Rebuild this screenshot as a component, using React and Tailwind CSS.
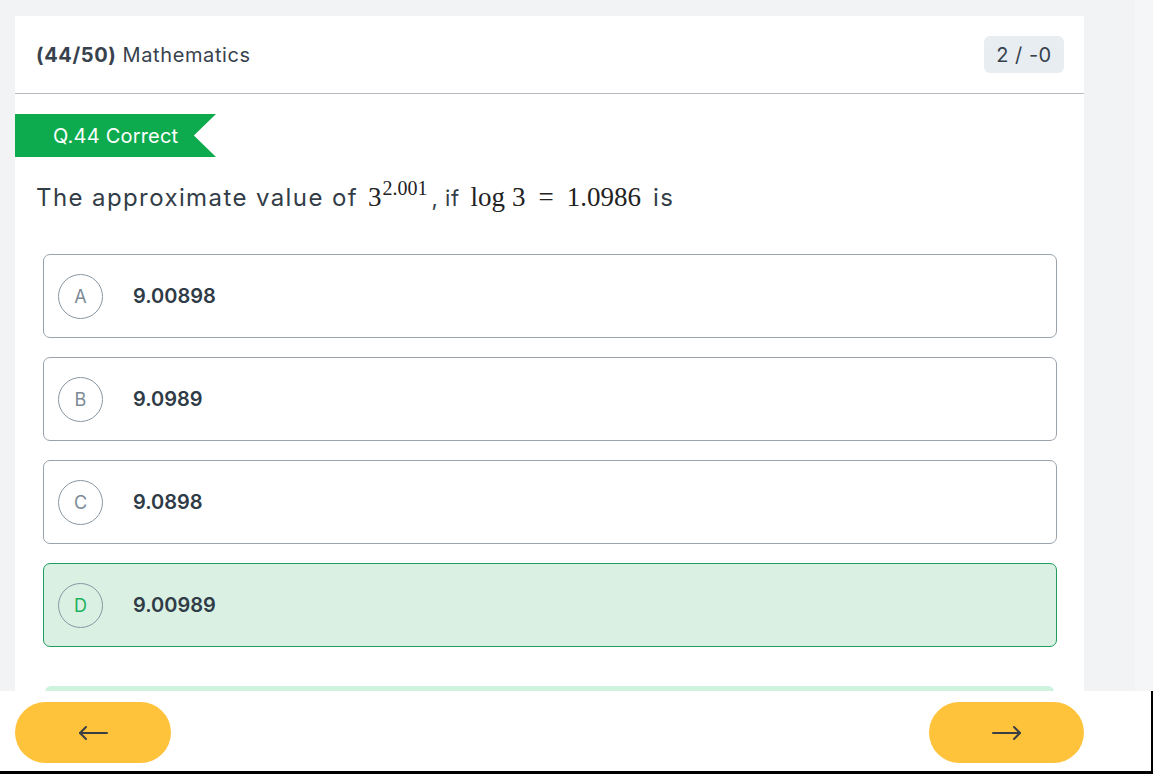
import React from 'react';

const options = [
  { key: 'A', text: '9.00898' },
  { key: 'B', text: '9.0989' },
  { key: 'C', text: '9.0898' },
  { key: 'D', text: '9.00989', correct: true },
];

const sans = { fontFamily: 'Inter, "Open Sans", sans-serif' };
const serif = { fontFamily: '"Liberation Serif", "DejaVu Serif", serif' };

export default function App() {
  return (
    <div className="h-[774px] w-[1153px] flex flex-col bg-[#f2f3f5] overflow-hidden" style={sans}>
      {/* scrolling area */}
      <div className="flex-1 flex overflow-hidden">
        <div className="pl-[15px] pt-4 w-[1135px]">
          <div className="w-[1069px] h-full bg-white">
            {/* header */}
            <div className="flex items-center justify-between pl-[21px] pr-5 h-[78px] border-b border-[#b6bbc1]">
              <div className="text-[20px] text-[#37424d] tracking-[0.6px]">
                <span className="font-bold">(44/50)</span> Mathematics
              </div>
              <div className="bg-[#e8edf2] rounded-md w-[80px] h-[37px] flex items-center justify-center text-[20px] text-[#37424d] tracking-[0.5px]">
                2 / -0
              </div>
            </div>

            {/* ribbon */}
            <div
              className="mt-5 w-[201px] h-[43px] bg-[#0dab4e] text-white text-[20px] flex items-center pl-[38px] tracking-[0.2px]"
              style={{ clipPath: 'polygon(0 0, 100% 0, 89% 50%, 100% 100%, 0 100%)' }}
            >
              Q.44 Correct
            </div>

            {/* question */}
            <div className="mt-[20px] pl-[21px] flex items-baseline text-[24px] text-[#333d47] h-[36px] tracking-[1.4px]">
              <span>The approximate value of</span>
              <span className="ml-[10px] text-[27px] text-[#222] tracking-normal" style={serif}>
                3<sup className="text-[20px] ml-[1px] relative -top-[11px]">2.001</sup>
              </span>
              <span className="ml-[4px] text-[22px] tracking-[0.5px]">, if</span>
              <span className="ml-[11px] text-[27px] text-[#222] tracking-normal" style={serif}>
                log<span className="ml-[7px]">3</span>
                <span className="mx-[13px]">=</span>1.0986
              </span>
              <span className="ml-[12px]">is</span>
            </div>

            {/* options */}
            <div className="mt-[41px] ml-[28px] mr-[27px] flex flex-col gap-[19px]">
              {options.map((o) => (
                <div
                  key={o.key}
                  className={`h-[84px] rounded-[7px] border flex items-center pl-[14px] ${
                    o.correct ? 'bg-[#d9f0e3] border-[#1f9d5c]' : 'bg-white border-[#9aa2ab]'
                  }`}
                >
                  <div
                    className={`w-[45px] h-[45px] rounded-full border border-[#8a97a3] flex items-center justify-center text-[18px] ${
                      o.correct ? 'text-[#20b25c]' : 'text-[#7d8a96]'
                    }`}
                  >
                    {o.key}
                  </div>
                  <div className="ml-[30px] text-[20px] font-semibold text-[#2f3b46]">{o.text}</div>
                </div>
              ))}
            </div>

            {/* explanation box (cut off) */}
            <div className="mt-[39px] mx-[30px] h-[20px] rounded-t-[6px] bg-[#cdf3df]" />
          </div>
        </div>
        <div className="flex-1 bg-[#f5f6f7]" />
      </div>

      {/* bottom nav */}
      <div className="h-[83px] bg-white border-r-2 border-b-[3px] border-black flex items-start justify-between pl-[15px] pr-[67px] pt-[11px]">
        <button className="w-[156px] h-[61px] rounded-full bg-[#ffc23b] flex items-center justify-center text-[#3a3f44]">
          <svg width="30" height="16" viewBox="0 0 30 16" fill="none" stroke="currentColor" strokeWidth="2" strokeLinecap="round" strokeLinejoin="round">
            <path d="M29 8H2" />
            <path d="M8 2L2 8l6 6" />
          </svg>
        </button>
        <button className="w-[155px] h-[61px] rounded-full bg-[#ffc23b] flex items-center justify-center text-[#3a3f44]">
          <svg width="30" height="16" viewBox="0 0 30 16" fill="none" stroke="currentColor" strokeWidth="2" strokeLinecap="round" strokeLinejoin="round">
            <path d="M1 8h27" />
            <path d="M22 2l6 6-6 6" />
          </svg>
        </button>
      </div>
    </div>
  );
}
